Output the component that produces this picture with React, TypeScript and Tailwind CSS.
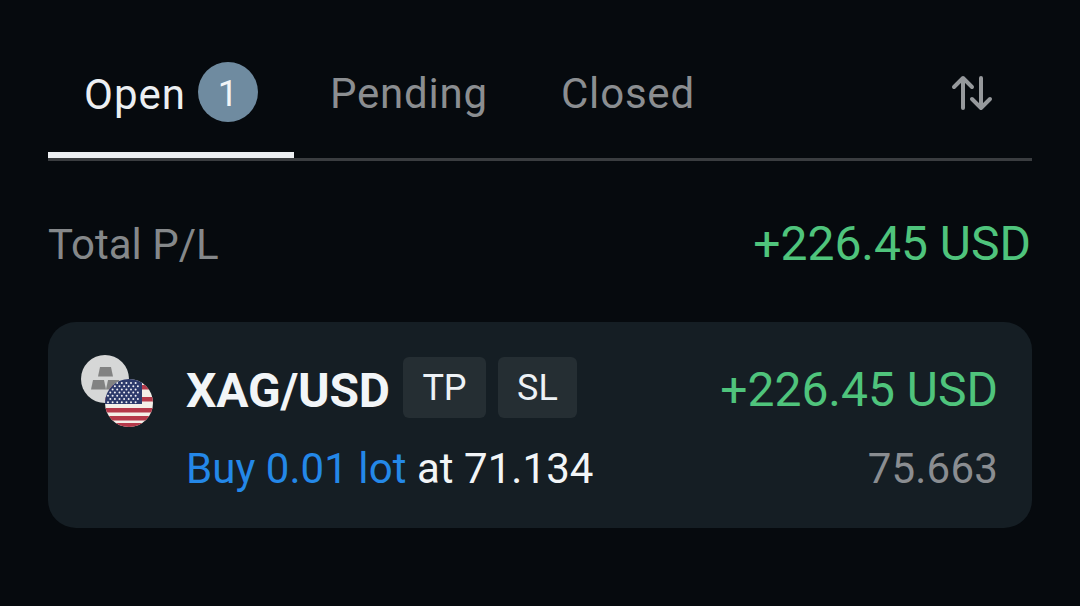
const roboto = "font-['Roboto',sans-serif]";

function SilverUsdIcon() {
  const stars: [number, number][] = [];
  for (let row = 0; row < 7; row++) {
    for (let col = 0; col < 7; col++) {
      stars.push([108 + col * 4.6 + (row % 2 ? 2.3 : 0), 383 + row * 3.2]);
    }
  }
  const stripes = [385, 397, 408, 416, 423];
  return (
    <svg width="74" height="74" viewBox="80 354 74 74" className="shrink-0">
      <circle cx="105" cy="379" r="24" fill="#d6d7d7" />
      <path d="M100 367h11l2 9.5H98z" fill="#828282" />
      <path d="M93 380h11l2 9.5H91z" fill="#828282" />
      <path d="M108 380h11l2 9.5h-15z" fill="#828282" />
      <clipPath id="flag">
        <circle cx="129" cy="403" r="24" />
      </clipPath>
      <g clipPath="url(#flag)">
        <rect x="105" y="379" width="48" height="48" fill="#f4efe8" />
        {stripes.map(y => (
          <rect key={y} x="105" y={y} width="48" height="4.5" fill="#b5394a" />
        ))}
        <rect x="105" y="379" width="37" height="25" fill="#2d3a6b" />
        {stars.map(([x, y]) => (
          <circle key={`${x}-${y}`} cx={x} cy={y} r="1" fill="#f0f0f4" />
        ))}
      </g>
    </svg>
  );
}

function Tag({ label, width }: { label: string; width: string }) {
  return (
    <div className={`flex h-[61px] items-center justify-center rounded-[6px] bg-[#252e33] pt-[1px] text-[36px] text-[#eef2f6] ${width}`}>
      {label}
    </div>
  );
}

export default function App() {
  return (
    <div className={`${roboto} h-[606px] w-[1080px] overflow-hidden bg-[#060a0e] px-[48px] pt-[60px]`}>
      <div className="flex h-[101px] items-start border-b-[3px] border-[#3a3d40]">
        <div className="relative flex h-[98px] w-[246px] items-start pl-[36px]">
          <span className="mt-[7px] text-[42px] leading-[56px] tracking-[1px] text-[#eceff2]">Open</span>
          <span className="ml-[12px] mt-[2px] flex h-[60px] w-[60px] items-center justify-center rounded-full bg-[#6f8ba0] pt-[4px] text-[36px] text-[#f2f5f7]">
            1
          </span>
          <div className="absolute bottom-0 left-0 h-[6px] w-full bg-[#eceff2]" />
        </div>
        <span className="ml-[36px] mt-[6px] text-[42px] leading-[56px] tracking-[0.8px] text-[#8b8e91]">Pending</span>
        <span className="ml-[73px] mt-[6px] text-[42px] leading-[56px] tracking-[0.8px] text-[#8b8e91]">Closed</span>
        <svg
          width="42"
          height="36"
          viewBox="0 0 42 36"
          fill="none"
          stroke="#96999c"
          strokeWidth="4"
          strokeLinecap="round"
          strokeLinejoin="round"
          className="ml-auto mr-[39px] mt-[15px]"
        >
          <path d="M12 33V3M3 12l9-9 9 9" />
          <path d="M30 3v30M21 24l9 9 9-9" />
        </svg>
      </div>

      <div className="mt-[50px] flex h-[66px] items-center justify-between pr-[1px]">
        <span className="text-[42px] text-[#85888a]">Total P/L</span>
        <span className="text-[48px] text-[#4fc47c]">+226.45 USD</span>
      </div>

      <div className="mt-[45px] flex h-[206px] flex-col rounded-[28px] bg-[#151e24] pl-[32px] pr-[34px] pt-[32px]">
        <div className="flex items-start">
          <SilverUsdIcon />
          <div className="ml-[32px] flex h-[68px] flex-1 flex-col">
            <div className="flex h-[68px] shrink-0 items-start">
              <span className="mt-[6px] w-[204px] text-[48px] font-bold leading-[61px] tracking-[-0.2px] text-[#f2f5f7]">XAG/USD</span>
              <div className="ml-[13px] mt-[3px] flex gap-[12px]">
                <Tag label="TP" width="w-[83px]" />
                <Tag label="SL" width="w-[79px]" />
              </div>
              <span className="ml-auto mt-[5px] text-[48px] leading-[61px] text-[#4fc47c]">+226.45 USD</span>
            </div>
            <div className="mt-[22px] flex shrink-0 items-center justify-between text-[42px] leading-[50px] tracking-[0.05px]">
              <span className="text-[#f2f5f7]">
                <span className="text-[#2488e8]">Buy 0.01 lot</span> at 71.134
              </span>
              <span className="tracking-[0.2px] text-[#8a8d91]">75.663</span>
            </div>
          </div>
        </div>
      </div>
    </div>
  );
}
